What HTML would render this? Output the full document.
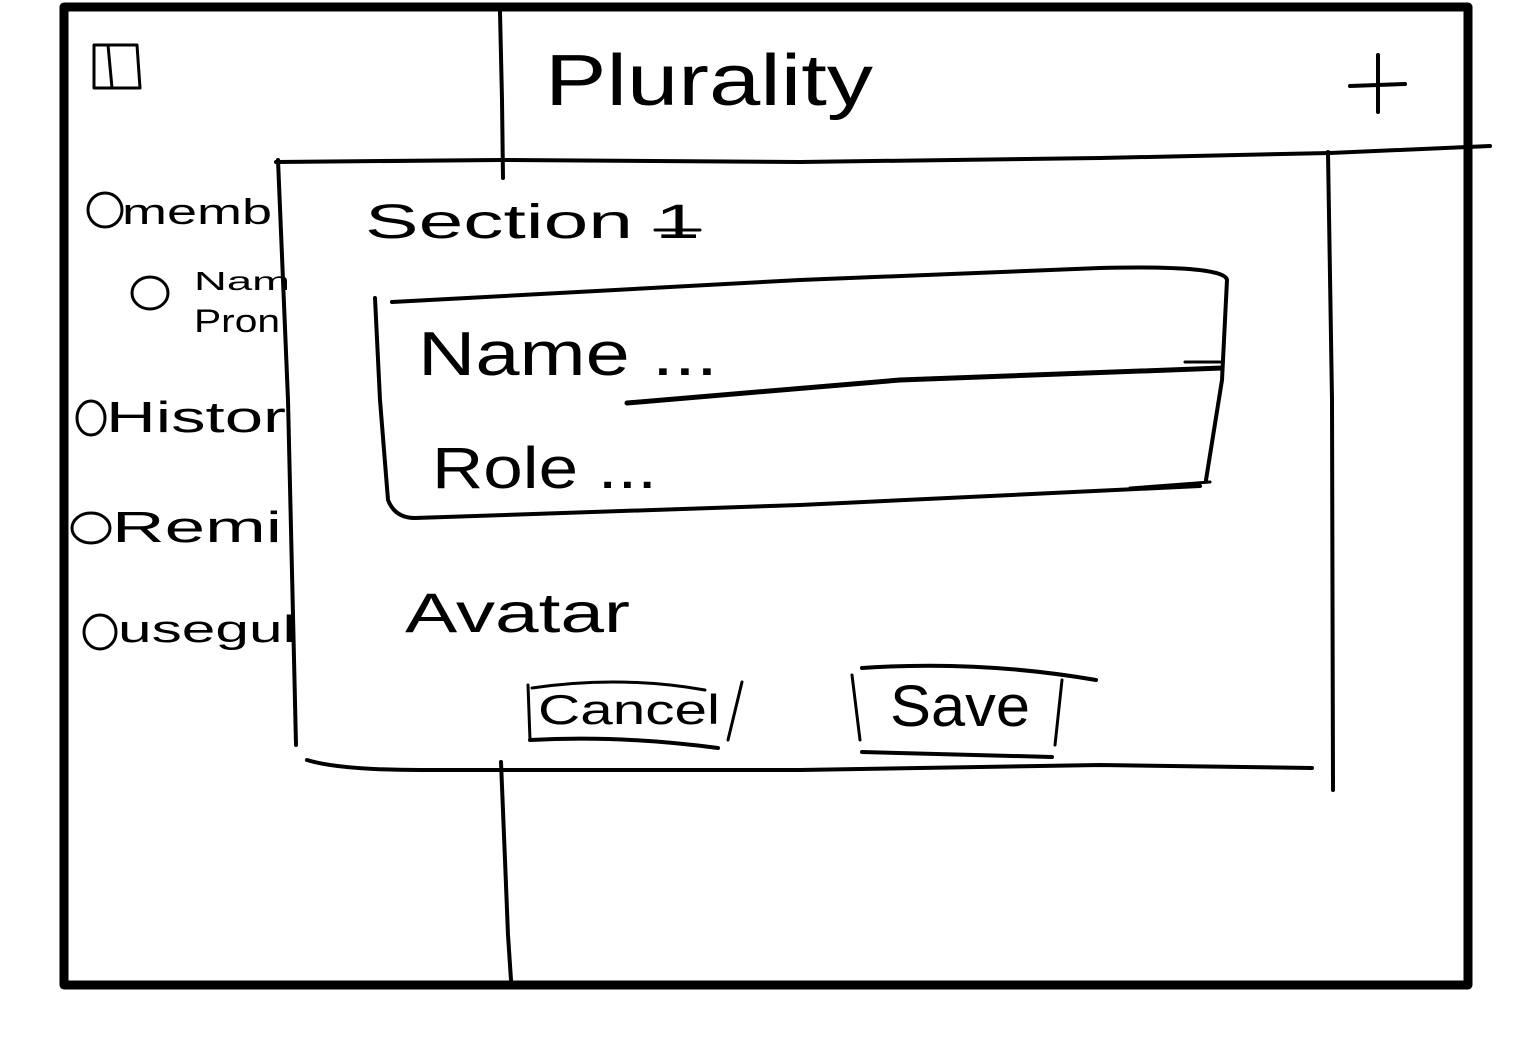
<!DOCTYPE html>
<html><head><meta charset="utf-8"><style>
html,body{margin:0;padding:0;background:#fff;width:1536px;height:1052px;overflow:hidden}
svg{display:block}
text{font-family:"Liberation Sans",sans-serif;fill:#000}
</style></head><body>
<svg width="1536" height="1052" viewBox="0 0 1536 1052" xmlns="http://www.w3.org/2000/svg">
<g fill="none" stroke="#000" stroke-linecap="round" stroke-linejoin="round">
<rect x="64" y="7" width="1404" height="978" stroke-width="9"/>
<path d="M500 12 L502 100 L503 178" stroke-width="4"/>
<path d="M501 762 L505 860 L508 935 L511 980" stroke-width="4"/>
<path d="M276 162 L500 160 L800 162 L1100 158 L1330 153 L1490 146" stroke-width="4"/>
<path d="M278 160 L288 400 L296 745" stroke-width="4"/>
<path d="M307 760 Q340 770 420 770 L800 770 L1100 765 L1312 768" stroke-width="4"/>
<path d="M1328 152 L1332 400 L1333 790" stroke-width="4"/>
<path d="M392 302 L800 280 L1100 268 Q1225 265 1227 280 L1222 380 L1206 480" stroke-width="4"/>
<path d="M375 298 L380 400 L388 500 Q395 518 415 518 L800 505 L1200 486" stroke-width="4"/>
<path d="M627 403 L900 380 L1222 368" stroke-width="5"/>
<path d="M1185 362 L1220 362" stroke-width="3"/>
<path d="M1130 488 L1210 482" stroke-width="3"/>
<path d="M532 688 Q620 675 705 690" stroke-width="3"/>
<path d="M528 685 L530 740" stroke-width="3"/>
<path d="M530 740 Q620 735 718 748" stroke-width="4"/>
<path d="M742 682 L728 740" stroke-width="3"/>
<path d="M862 668 Q980 660 1096 680" stroke-width="4"/>
<path d="M852 675 L860 740" stroke-width="3"/>
<path d="M862 752 L1052 757" stroke-width="4"/>
<path d="M1062 680 L1055 745" stroke-width="3"/>
<ellipse cx="105" cy="210" rx="17" ry="17" stroke-width="3"/>
<ellipse cx="150" cy="293" rx="18" ry="16" stroke-width="3"/>
<ellipse cx="91" cy="418" rx="14" ry="17" stroke-width="3"/>
<ellipse cx="91" cy="528" rx="19" ry="15" stroke-width="3"/>
<ellipse cx="100" cy="632" rx="16" ry="17" stroke-width="3"/>
<path d="M94 45 L94 88 L140 88 L137 45 Z M108 45 L112 88" stroke-width="3"/>
<path d="M1378 55 L1378 112 M1350 86 L1405 84" stroke-width="4"/>
<path d="M655 230 L700 230" stroke-width="3"/>
</g>
<text x="545" y="105" font-size="72" textLength="328" lengthAdjust="spacingAndGlyphs">Plurality</text>
<text x="365" y="238" font-size="48" textLength="335" lengthAdjust="spacingAndGlyphs">Section 1</text>
<text x="418" y="375" font-size="62" textLength="300" lengthAdjust="spacingAndGlyphs">Name ...</text>
<text x="432" y="488" font-size="58" textLength="225" lengthAdjust="spacingAndGlyphs">Role ...</text>
<text x="405" y="632" font-size="56" textLength="225" lengthAdjust="spacingAndGlyphs">Avatar</text>
<text x="538" y="724" font-size="42" textLength="182" lengthAdjust="spacingAndGlyphs">Cancel</text>
<text x="890" y="726" font-size="58" textLength="140" lengthAdjust="spacingAndGlyphs">Save</text>
<text x="122" y="224" font-size="36" textLength="150" lengthAdjust="spacingAndGlyphs">memb</text>
<text x="194" y="290" font-size="26" textLength="96" lengthAdjust="spacingAndGlyphs">Nam</text>
<text x="194" y="332" font-size="32" textLength="86" lengthAdjust="spacingAndGlyphs">Pron</text>
<text x="106" y="432" font-size="44" textLength="180" lengthAdjust="spacingAndGlyphs">Histor</text>
<text x="112" y="542" font-size="44" textLength="170" lengthAdjust="spacingAndGlyphs">Remi</text>
<text x="118" y="642" font-size="38" textLength="178" lengthAdjust="spacingAndGlyphs">usegul</text>
</svg>
</body></html>
